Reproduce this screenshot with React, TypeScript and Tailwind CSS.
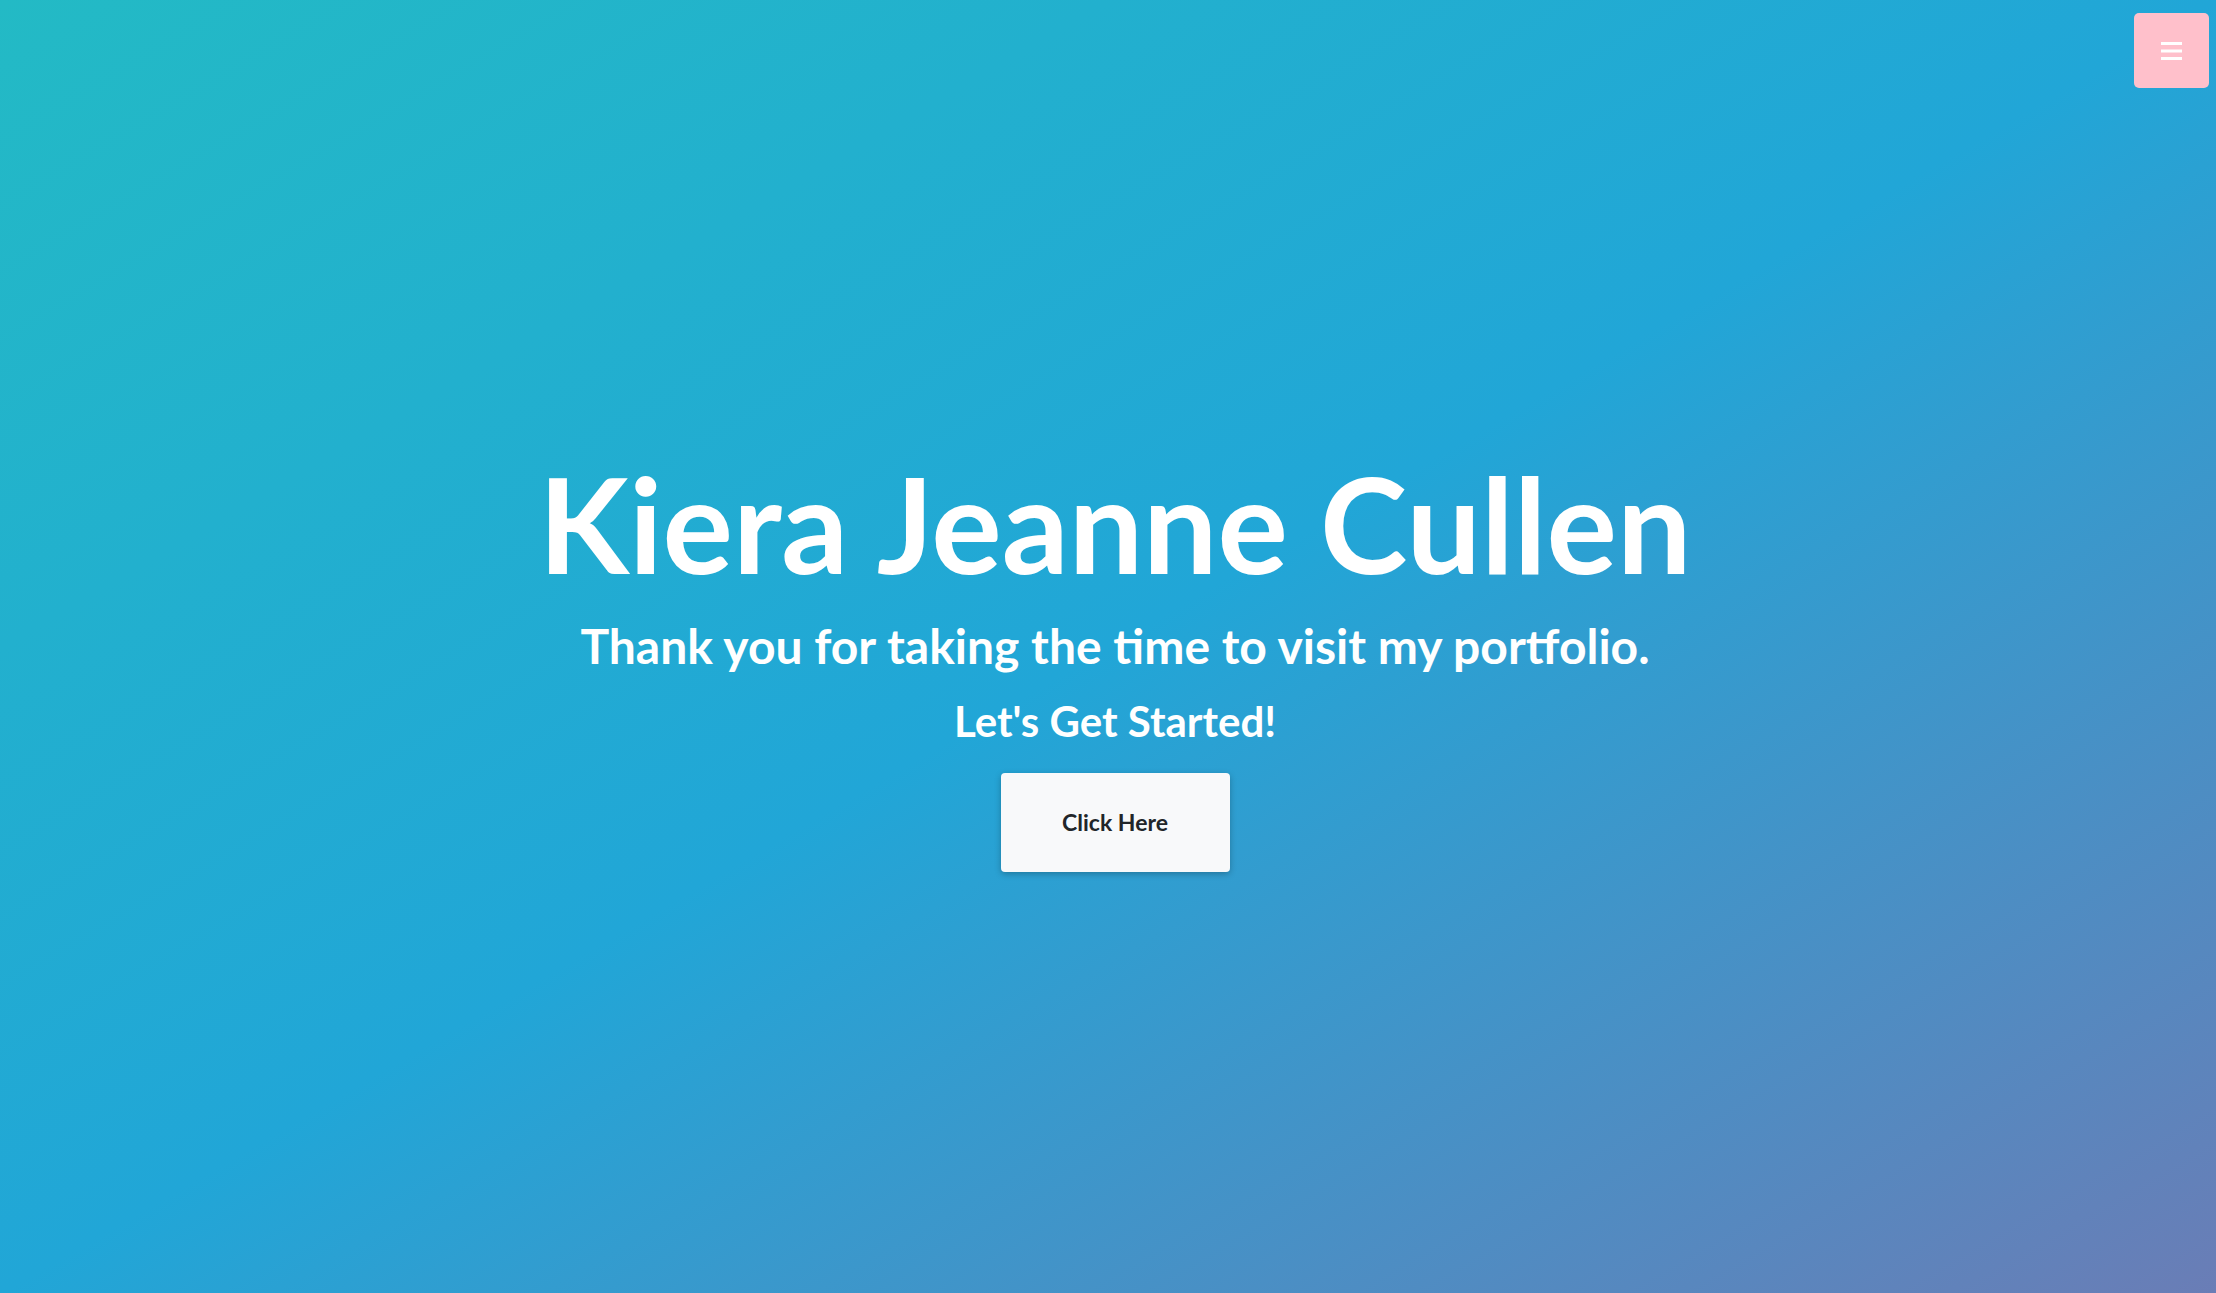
export default function App() {
  return (
    <div className="relative min-h-screen w-full overflow-hidden bg-[linear-gradient(to_bottom_right,#23bac5_0%,#21a6d7_50%,#6a7db6_100%)] font-['Lato',sans-serif] text-white">
      {/* menu toggle */}
      <button className="absolute right-[7px] top-[13px] flex h-[75px] w-[75px] items-center justify-center rounded-[5px] bg-[#ffc0cb]">
        <svg width="21" height="18" viewBox="0 0 21 18" fill="#ffffff">
          <rect x="0" y="0" width="21" height="3" />
          <rect x="0" y="7.5" width="21" height="3" />
          <rect x="0" y="15" width="21" height="3" />
        </svg>
      </button>

      <main className="flex min-h-screen flex-col items-center justify-center pl-[14px] pt-[35px] text-center">
        <h1 className="text-[132px] font-bold leading-none">Kiera Jeanne Cullen</h1>
        <h2 className="mt-[33px] text-[48px] font-bold leading-none">Thank you for taking the time to visit my portfolio.</h2>
        <h3 className="mt-[30px] text-[42px] font-bold leading-none">Let's Get Started!</h3>
        <button className="mt-[31px] h-[99px] w-[229px] rounded-[4px] bg-[#f8f9fa] text-[23px] font-bold text-[#212529] shadow-[0_2px_6px_rgba(0,0,0,0.25)]">
          Click Here
        </button>
      </main>
    </div>
  );
}
